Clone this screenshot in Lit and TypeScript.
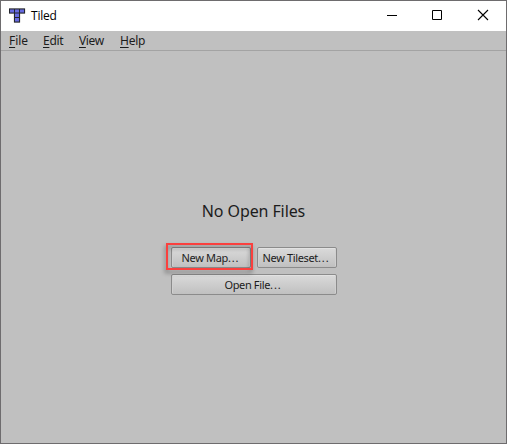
import { LitElement, html, css } from "lit";
import { customElement } from "lit/decorators.js";

@customElement("app-root")
export class AppRoot extends LitElement {
  static styles = css`
    :host {
      display: flex;
      flex-direction: column;
      box-sizing: border-box;
      width: 507px;
      height: 444px;
      border: 1px solid #6e6c6e;
      background: #c0c0c0;
      color: #1c1c1c;
      font-family: "Noto Sans", "Open Sans", sans-serif;
      font-size: 12px;
      overflow: hidden;
    }
    .titlebar {
      display: flex;
      align-items: center;
      height: 30px;
      flex: none;
      background: #fff;
      color: #000;
    }
    .logo { margin: 0 5px 0 8px; }
    .title { flex: 1; font-family: "Open Sans", sans-serif; letter-spacing: -0.2px; line-height: 16px; padding-bottom: 1px; }
    .control { width: 46px; height: 30px; flex: none; }
    svg { display: block; }
    .menubar {
      display: flex;
      gap: 16px;
      height: 19px;
      padding-left: 8px;
      flex: none;
      border-bottom: 1px solid #a3a3a3;
      line-height: 20px;
    }
    .menu { white-space: nowrap; }
    .file { width: 18px; letter-spacing: -0.1px; }
    .edit { width: 20px; letter-spacing: -0.3px; }
    .view { width: 25px; letter-spacing: -0.35px; }
    .help { letter-spacing: -0.25px; }
    .key { text-decoration: underline; text-underline-offset: 2px; text-decoration-thickness: 1px; text-decoration-skip-ink: none; }
    .content {
      flex: 1;
      display: flex;
      flex-direction: column;
      align-items: center;
      padding-top: 148px;
    }
    .heading { font-size: 16px; line-height: 24px; height: 24px; letter-spacing: -0.1px; margin-bottom: 24px; }
    .buttons { display: grid; grid-template-columns: 80px 80px; gap: 6px; width: 166px; }
    .wide { grid-column: span 2; }
    button {
      box-sizing: border-box;
      height: 21px;
      width: 100%;
      padding: 0 1px 0 0;
      border: 1px solid #8b8b8b;
      border-radius: 2px;
      background: linear-gradient(#dadada, #c0c0c0);
      box-shadow: inset 0 1px #e2e2e2, inset 1px 0 #d0d0d0, inset -1px 0 #d0d0d0;
      color: #1c1c1c;
      font: 11px/19px "Noto Sans", sans-serif;
      letter-spacing: -0.35px;
      white-space: nowrap;
    }
    .dots { letter-spacing: 0.9px; }
    .marked { position: relative; }
    .marked button { padding: 0; }
    .highlight {
      position: absolute;
      left: -5px;
      top: -4px;
      width: 87px;
      height: 27px;
      box-sizing: border-box;
      border: 2px solid #fa403e;
      filter: drop-shadow(-1px 3px 2px rgba(0, 0, 0, 0.4));
      pointer-events: none;
    }
  `;

  render() {
    return html`
      <header class="titlebar">
        <svg class="logo" width="17" height="16" viewBox="0 0 17 16">
          <path d="M0 .5h16v5h-5v9H5v-9H0z" fill="#24262e" stroke="#c9c9c9" stroke-width=".8" />
          <path d="M0 .5h16v5h-5v9H5v-9H0z" fill="#24262e" />
          <path d="M1 1.5h4v3H1zM6 1.5h4v3H6zM11 1.5h4v3h-4zM6 5.5h4v3.5H6zM6 10h4v3.5H6z" fill="#666ae0" />
        </svg>
        <span class="title">Tiled</span>
        <svg class="control" viewBox="0 0 46 30"><path d="M19 14.5h10" stroke="#000" /></svg>
        <svg class="control" viewBox="0 0 46 30"><path d="M18.5 9.5h9v9h-9z" fill="none" stroke="#000" /></svg>
        <svg class="control" viewBox="0 0 46 30"><path d="M18 9l10 10M28 9L18 19" stroke="#000" stroke-width="1.1" /></svg>
      </header>
      <nav class="menubar">
        <span class="menu file"><span class="key">F</span>ile</span>
        <span class="menu edit"><span class="key">E</span>dit</span>
        <span class="menu view"><span class="key">V</span>iew</span>
        <span class="menu help"><span class="key">H</span>elp</span>
      </nav>
      <main class="content">
        <div class="heading">No Open Files</div>
        <div class="buttons">
          <div class="marked"><button>New Map<span class="dots">...</span></button><div class="highlight"></div></div>
          <button>New Tileset<span class="dots">...</span></button>
          <button class="wide">Open File<span class="dots">...</span></button>
        </div>
      </main>
    `;
  }
}
